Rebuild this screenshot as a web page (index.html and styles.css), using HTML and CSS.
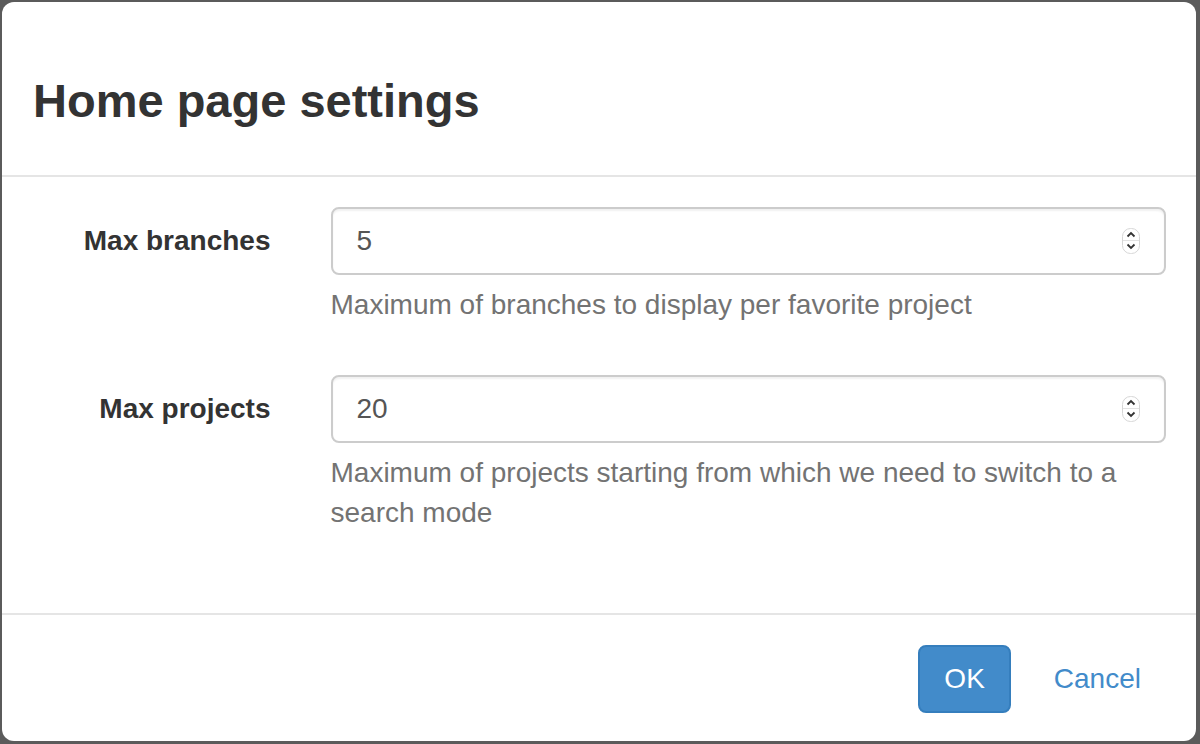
FILE: index.html
```html
<!DOCTYPE html>
<html>
<head>
<meta charset="utf-8">
<link rel="stylesheet" href="styles.css">
</head>
<body>
<div class="modal">
  <div class="modal-header">
    <h4 class="modal-title">Home page settings</h4>
  </div>
  <div class="modal-body">
    <div class="form-group">
      <label class="control-label">Max branches</label>
      <div class="control">
        <div class="input">
          <span class="value">5</span>
          <svg class="spinner" width="18" height="26" viewBox="0 0 18 26"><rect x="0.5" y="0.5" width="17" height="25" rx="8" fill="#fff" stroke="#d6d6d6"/><line x1="1" y1="12.5" x2="17" y2="12.5" stroke="#e2e2e2"/><path d="M5.5 8.5 L9 5 L12.5 8.5" fill="none" stroke="#333" stroke-width="1.8"/><path d="M5.5 16.5 L9 20 L12.5 16.5" fill="none" stroke="#333" stroke-width="1.8"/></svg>
        </div>
        <p class="help-block">Maximum of branches to display per favorite project</p>
      </div>
    </div>
    <div class="form-group">
      <label class="control-label">Max projects</label>
      <div class="control">
        <div class="input">
          <span class="value">20</span>
          <svg class="spinner" width="18" height="26" viewBox="0 0 18 26"><rect x="0.5" y="0.5" width="17" height="25" rx="8" fill="#fff" stroke="#d6d6d6"/><line x1="1" y1="12.5" x2="17" y2="12.5" stroke="#e2e2e2"/><path d="M5.5 8.5 L9 5 L12.5 8.5" fill="none" stroke="#333" stroke-width="1.8"/><path d="M5.5 16.5 L9 20 L12.5 16.5" fill="none" stroke="#333" stroke-width="1.8"/></svg>
        </div>
        <p class="help-block">Maximum of projects starting from which we need to switch to a search mode</p>
      </div>
    </div>
  </div>
  <div class="modal-footer">
    <button class="btn btn-primary">OK</button>
    <a class="btn-link">Cancel</a>
  </div>
</div>
</body>
</html>
```
FILE: styles.css
```css
html, body {
  margin: 0;
  height: 744px;
  overflow: hidden;
}
body {
  background: #5b5b5b;
  padding: 2px 4px 3px 2px;
  box-sizing: border-box;
  font-family: "Liberation Sans", Arial, sans-serif;
  color: #333;
}
.modal {
  background: #fff;
  border-radius: 12px;
  height: 739px;
  display: flex;
  flex-direction: column;
  overflow: hidden;
}
.modal-header {
  padding: 73px 30px 49px 31px;
  border-bottom: 2px solid #e5e5e5;
}
.modal-title {
  margin: 0;
  font-size: 47px;
  line-height: 51px;
  font-weight: 700;
  color: #333;
}
.modal-body {
  padding: 30px 30px;
}
.form-group {
  display: grid;
  grid-template-columns: 238.5px 1fr;
  column-gap: 60px;
  margin-bottom: 30px;
}
.control-label {
  text-align: right;
  font-weight: 700;
  font-size: 28px;
  line-height: 40px;
  padding-top: 14px;
  color: #333;
}
.input {
  position: relative;
  height: 68px;
  box-sizing: border-box;
  border: 2px solid #ccc;
  border-radius: 8px;
  padding: 12px 24px;
  font-size: 28px;
  line-height: 40px;
  color: #555;
  box-shadow: inset 0 2px 2px rgba(0,0,0,0.06);
}
.spinner {
  position: absolute;
  right: 24px;
  top: 19px;
}
.help-block {
  margin: 10px 0 20px;
  font-size: 28px;
  line-height: 40px;
  color: #737373;
}
.modal-footer {
  border-top: 2px solid #e5e5e5;
  padding: 30px 31px 28px 30px;
  display: flex;
  justify-content: flex-end;
  align-items: center;
  gap: 19px;
}
.btn {
  font-family: "Liberation Sans", Arial, sans-serif;
  font-size: 28px;
  line-height: 40px;
  padding: 12px 24px;
  border-radius: 8px;
  height: 68px;
  box-sizing: border-box;
}
.btn-primary {
  background: #428bca;
  border: 2px solid #357ebd;
  color: #fff;
}
.btn-link {
  font-size: 28px;
  line-height: 40px;
  padding: 12px 24px;
  color: #428bca;
}
```
